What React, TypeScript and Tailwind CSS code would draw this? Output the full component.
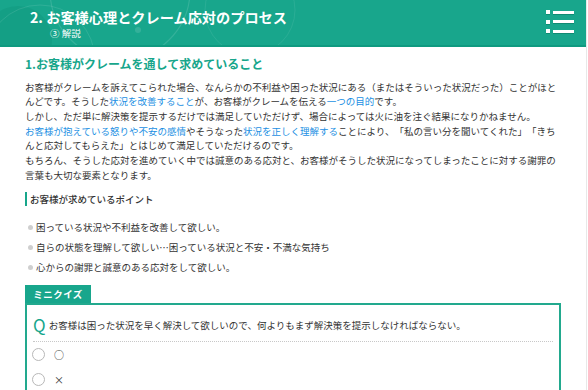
import React from "react";

const TEAL = "text-[#17a68b]";

const points = [
  "困っている状況や不利益を改善して欲しい。",
  "自らの状態を理解して欲しい…困っている状況と不安・不満な気持ち",
  "心からの謝罪と誠意のある応対をして欲しい。",
];

const MenuIcon = () => (
  <div className="mt-[3px] flex flex-col gap-[5.5px] drop-shadow-[0_1px_0_rgba(0,90,70,0.35)]">
    {[0, 1, 2].map((i) => (
      <div key={i} className="flex items-center gap-[3px]">
        <span className="block w-[4px] h-[4px] bg-white" />
        <span className="block w-[21px] h-[3px] bg-white" />
      </div>
    ))}
  </div>
);

const HeaderDecor = () => (
  <svg className="absolute inset-0 pointer-events-none" width="586" height="45" viewBox="0 0 586 45">
    <circle cx="18" cy="40" r="34" fill="#0f9179" opacity="0.35" />
    <circle cx="120" cy="-10" r="70" fill="none" stroke="#ffffff" strokeOpacity="0.12" strokeWidth="1.2" />
    <circle cx="40" cy="60" r="55" fill="none" stroke="#ffffff" strokeOpacity="0.1" strokeWidth="1" />
    <circle cx="250" cy="10" r="45" fill="none" stroke="#ffffff" strokeOpacity="0.08" strokeWidth="1" />
    <circle cx="138" cy="30" r="3" fill="#ffffff" opacity="0.12" />
  </svg>
);

const Radio = ({ label }: { label: string }) => (
  <label className="flex items-center h-[25px] gap-[9px] -ml-px">
    <span className="block w-[13px] h-[13px] rounded-full border border-[#b8b8b8] bg-white" />
    <span className="text-[10px] text-[#333]">{label}</span>
  </label>
);

export default function App() {
  return (
    <div className="w-[587px] min-h-[390px] bg-white border-r border-[#e8e8e8] overflow-hidden font-['Noto_Sans_CJK_JP','Noto_Sans',sans-serif] text-[#333] [text-spacing-trim:space-all]">
      <header className="relative h-[47px] bg-[#18a68c] border-b-2 border-[#0f9a80] overflow-hidden">
        <HeaderDecor />
        <div className="relative flex items-start justify-between pl-[30px] pr-[12px] pt-[7px]">
          <div>
            <h1 className="text-[14.2px] leading-[20px] font-bold text-white">
              2. お客様心理とクレーム応対のプロセス
            </h1>
            <p className="pl-[20px] text-[9.5px] leading-[12px] text-white">③ 解説</p>
          </div>
          <MenuIcon />
        </div>
      </header>

      <main className="px-[25px]">
        <h2 className={`mt-[9px] text-[12px] leading-[16px] font-bold ${TEAL}`}>
          1.お客様がクレームを通して求めていること
        </h2>

        <p className="mt-[7.5px] text-[9.5px] leading-[14.7px]">
          お客様がクレームを訴えてこられた場合、なんらかの不利益や困った状況にある（またはそういった状況だった）ことがほとんどです。そうした
          <span className="text-[#1b8fe3]">状況を改善すること</span>
          が、お客様がクレームを伝える
          <span className="text-[#1b8fe3]">一つの目的</span>
          です。
          <br />
          しかし、ただ単に解決策を提示するだけでは満足していただけず、場合によっては火に油を注ぐ結果になりかねません。
          <br />
          <span className="text-[#1b8fe3]">お客様が抱えている怒りや不安の感情</span>
          やそうなった
          <span className="text-[#1b8fe3]">状況を正しく理解する</span>
          ことにより、「私の言い分を聞いてくれた」「きちんと応対してもらえた」とはじめて満足していただけるのです。
          <br />
          もちろん、そうした応対を進めていく中では誠意のある応対と、お客様がそうした状況になってしまったことに対する謝罪の言葉も大切な要素となります。
        </p>

        <h3 className="mt-[10px] border-l-2 border-[#17a68b] pl-[3px] text-[9.5px] leading-[14px] font-medium">
          お客様が求めているポイント
        </h3>

        <ul className="mt-[11px]">
          {points.map((p) => (
            <li key={p} className="flex items-center gap-[3px] pl-[3px] h-[20px] text-[9.5px]">
              <span className="block w-[5px] h-[5px] rounded-full bg-[#cfcfcf]" />
              {p}
            </li>
          ))}
        </ul>

        <section className="mt-[8px]">
          <div className="w-[66px] h-[18px] flex items-center justify-center bg-[#18a68c] text-white text-[9.5px] font-bold tracking-[0.5px]">
            ミニクイズ
          </div>
          <div className="border-2 border-[#22a98e] h-[120px]">
            <div className="mx-[6px]">
              <div className="flex items-center gap-[3px] pt-[9px] pb-[6px] h-[37px] border-b border-dotted border-[#c8c8c8]">
                <span className={`text-[17px] leading-[22px] ${TEAL}`}>Q</span>
                <span className="text-[9.5px] leading-[22px]">
                  お客様は困った状況を早く解決して欲しいので、何よりもまず解決策を提示しなければならない。
                </span>
              </div>
              <Radio label="○" />
              <Radio label="×" />
            </div>
          </div>
        </section>
      </main>
    </div>
  );
}
